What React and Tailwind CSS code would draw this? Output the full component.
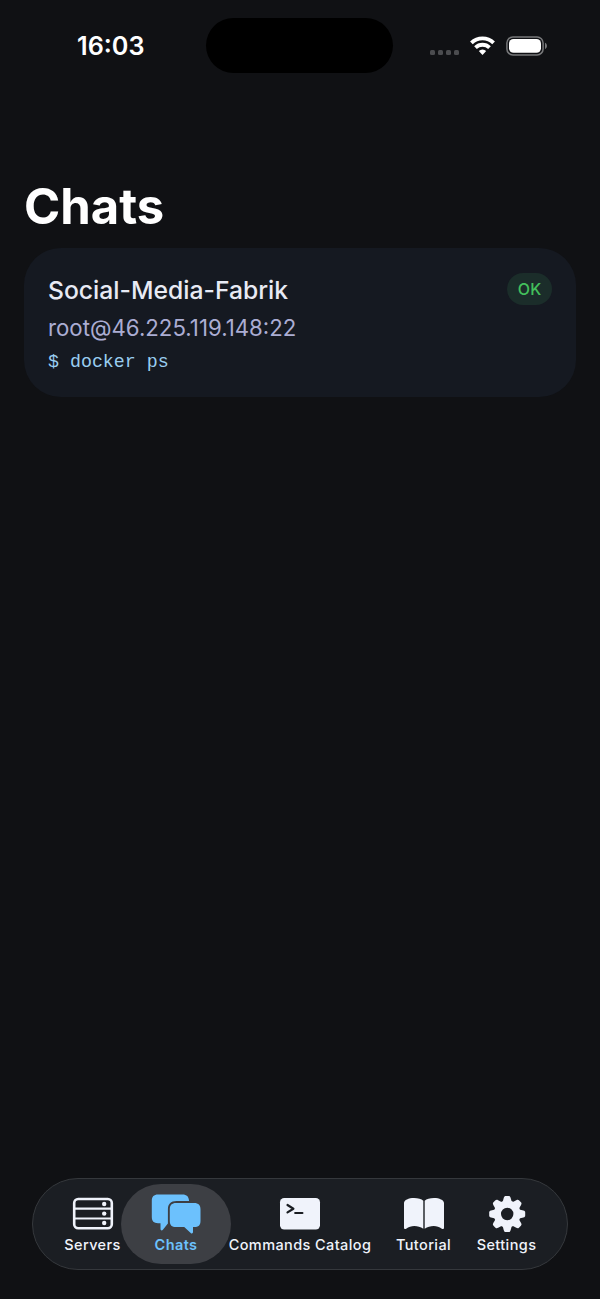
const TABS = [
  { id: 'servers', label: 'Servers', Icon: ServersIcon },
  { id: 'chats', label: 'Chats', Icon: ChatsIcon },
  { id: 'commands', label: 'Commands Catalog', Icon: TerminalIcon },
  { id: 'tutorial', label: 'Tutorial', Icon: BookIcon },
  { id: 'settings', label: 'Settings', Icon: GearIcon },
];

const CHATS = [
  { name: 'Social-Media-Fabrik', host: 'root@46.225.119.148:22', command: '$ docker ps', status: 'OK' },
];

function ServersIcon() {
  return (
    <svg className="w-[50px] h-10" viewBox="0 0 50 40" fill="none" stroke="currentColor">
      <rect x="6.2" y="5" width="37.6" height="29.2" rx="4" strokeWidth="2.6" />
      <path d="M6 14.700h38M6 24.500h38" strokeWidth="2.2" />
      <g fill="currentColor" stroke="none">
        <circle cx="36.2" cy="10" r="2.2" />
        <circle cx="36.2" cy="19.600" r="2.2" />
        <circle cx="36.2" cy="29" r="2.2" />
      </g>
    </svg>
  );
}

function ChatsIcon() {
  return (
    <svg className="w-[50px] h-10" viewBox="0 0 50 40" fill="currentColor">
      <path d="M7 .5h24.500c4.200 0 6.300 2.100 6.600 6.600H25.500c-5.800 0-8.600 2.900-8.600 8.600V29.600l-5 6.200c-1 1.100-2.400.7-2.400-.8V29.200H7c-4.100 0-6.200-2.100-6.200-6.200V6.700C.8 2.600 2.900.5 7 .5z" />
      <path d="M25 9.100h18.300c4.100 0 6.200 2.100 6.200 6.200v11.600c0 4.100-2.100 6.200-6.200 6.200H42v5c0 1.400-1.300 1.800-2.300.8l-6.500-5.800H25c-4.100 0-6.200-2.100-6.200-6.200V15.300c0-4.100 2.100-6.200 6.200-6.200z" />
    </svg>
  );
}

function TerminalIcon() {
  return (
    <svg className="w-[50px] h-10" viewBox="0 0 50 40" fill="none">
      <rect x="5" y="4" width="40" height="31.500" rx="4.200" fill="currentColor" />
      <path d="M12.500 11l5.900 3.700-5.900 3.700M20.200 19h7.200" stroke="#1b1e23" strokeWidth="2.200" strokeLinecap="round" strokeLinejoin="round" />
    </svg>
  );
}

function BookIcon() {
  return (
    <svg className="w-[50px] h-10" viewBox="0 0 50 40" fill="currentColor">
      <path d="M24.300 6.800v28c-2.700-1.900-5.800-2.800-9-2.800-3 0-5.700.8-8.100 2.700-1.200.8-2.200.3-2.200-1V9.100C5 6 9.700 4 15 4c4.100 0 7.500 1 9.300 2.800z" />
      <path d="M25.700 6.800v28c2.700-1.900 5.800-2.800 9-2.800 3 0 5.700.8 8.100 2.700 1.200.8 2.200.3 2.200-1V9.100C45 6 40.300 4 35 4c-4.100 0-7.500 1-9.300 2.800z" />
    </svg>
  );
}

function GearIcon() {
  return (
    <svg className="w-[50px] h-10" viewBox="-25.200 -20 50 40" fill="currentColor">
      <path fillRule="evenodd" d="M0-13.400a13.400 13.400 0 1 0 0 26.800 13.400 13.400 0 1 0 0-26.800zM0-6.200a6.200 6.200 0 1 1 0 12.400 6.200 6.200 0 1 1 0-12.400z" />
      {[0, 45, 90, 135, 180, 225, 270, 315].map((angle) => (
        <path
          key={angle}
          transform={`rotate(${angle})`}
          d="M-4.600-12l1.200-4.200c.4-1.300.9-1.800 2-1.800h2.800c1.100 0 1.600.5 2 1.800l1.200 4.200z"
        />
      ))}
    </svg>
  );
}

function StatusBar() {
  return (
    <div className="relative h-[90px] flex items-start justify-between pl-[77px] pr-[52px] text-white">
      <span className="mt-[31px] leading-[30px] text-[25.200px] font-semibold">16:03</span>
      <div className="absolute left-[206px] top-[18px] w-[187px] h-[55px] rounded-full bg-black" />
      <div className="mt-9 flex">
        <div className="flex gap-[3px] mt-3.5 mr-[11px]">
          {[0, 1, 2, 3].map((i) => (
            <span key={i} className="size-[5px] rounded-[1.5px] bg-[#4b4c4f]" />
          ))}
        </div>
        <svg className="w-[25px] h-[19px]" viewBox="0 0 25 19" fill="none" stroke="currentColor" strokeWidth="3.800">
          <path d="M1.400 6.900a15.800 15.800 0 0 1 22.200 0" />
          <path d="M5.500 11.600a10 10 0 0 1 14 0" />
          <path d="M12.500 19l-3.700-3.900a5.200 5.200 0 0 1 7.400 0z" fill="currentColor" stroke="none" />
        </svg>
        <svg className="w-[42px] h-[20px] ml-[11px]" viewBox="0 0 42 20" fill="none">
          <rect x=".9" y=".9" width="36.200" height="18" rx="6" stroke="#77787a" strokeWidth="1.500" />
          <rect x="3" y="3" width="32" height="13.800" rx="4.500" fill="currentColor" />
          <path d="M39 6.700c2.600 1 2.600 5.300 0 6.300z" fill="#77787a" />
        </svg>
      </div>
    </div>
  );
}

function ChatCard({ chat }) {
  return (
    <div className="h-[149px] rounded-[37px] bg-[#151921] px-6 pt-[26px]">
      <div className="flex items-start justify-between">
        <h2 className="text-[24.700px] leading-8 font-medium text-[#e8eaf4]">{chat.name}</h2>
        <span className="-mt-px w-[45px] h-8 rounded-full bg-[#1b2d2a] flex items-center justify-center text-[16px] font-medium text-[#43c05c]">
          {chat.status}
        </span>
      </div>
      <p className="mt-2 text-[22.250px] leading-7 text-[#abadd3]">{chat.host}</p>
      <p className="mt-1.5 font-['Liberation_Mono',monospace] text-[18.300px] leading-7 text-[#99cdf0]">{chat.command}</p>
    </div>
  );
}

function TabBar({ active }) {
  return (
    <nav className="mx-8 mb-[29px] h-[92px] rounded-full border border-[#35383c] bg-[#1b1e23] pl-[31px] pt-[5px] grid grid-cols-[57px_110px_138px_109px_57px]">
      {TABS.map(({ id, label, Icon }) => (
        <button
          key={id}
          className={`h-20 rounded-full flex flex-col items-center pt-[9.5px] ${
            active === id ? 'bg-[#3d3f44] text-[#6cc1fd] font-semibold' : 'text-[#f0f3fb] font-medium'
          }`}
        >
          <Icon />
          <span className="mt-[2.5px] text-[14.500px] leading-[18px] whitespace-nowrap tracking-[0.4px]">{label}</span>
        </button>
      ))}
    </nav>
  );
}

export default function App() {
  return (
    <div className="h-[1299px] flex flex-col overflow-hidden bg-[#101114] font-['Inter',sans-serif]">
      <StatusBar />
      <main className="flex-1 px-6 pt-[87px]">
        <h1 className="text-[49px] leading-[60px] font-bold text-white">Chats</h1>
        <div className="mt-[11px]">
          {CHATS.map((chat) => (
            <ChatCard key={chat.name} chat={chat} />
          ))}
        </div>
      </main>
      <TabBar active="chats" />
    </div>
  );
}
